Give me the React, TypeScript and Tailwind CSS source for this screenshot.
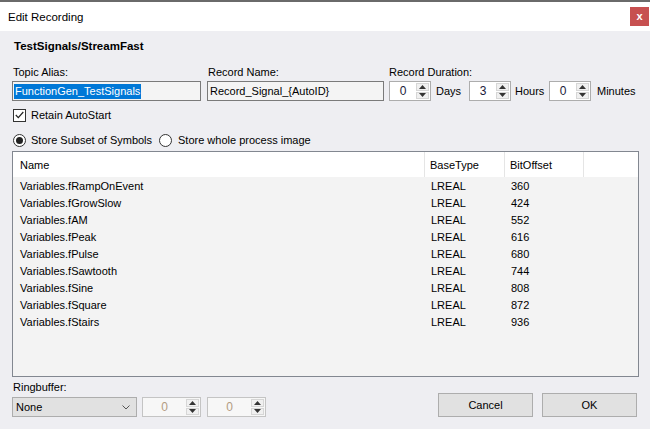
import React from 'react';

const rows: [string, string, string][] = [
  ['Variables.fRampOnEvent', 'LREAL', '360'],
  ['Variables.fGrowSlow', 'LREAL', '424'],
  ['Variables.fAM', 'LREAL', '552'],
  ['Variables.fPeak', 'LREAL', '616'],
  ['Variables.fPulse', 'LREAL', '680'],
  ['Variables.fSawtooth', 'LREAL', '744'],
  ['Variables.fSine', 'LREAL', '808'],
  ['Variables.fSquare', 'LREAL', '872'],
  ['Variables.fStairs', 'LREAL', '936'],
];

function SpinArrows() {
  return (
    <div className="flex flex-col w-[14px] h-full py-[1px] pr-[1px] gap-[1px]">
      <div className="flex-1 flex items-center justify-center border border-[#d6d6d6] bg-[#f0f0f0]">
        <svg width="7" height="4" viewBox="0 0 7 4"><path d="M0 4 L3.5 0 L7 4 Z" fill="#333" /></svg>
      </div>
      <div className="flex-1 flex items-center justify-center border border-[#d6d6d6] bg-[#f0f0f0]">
        <svg width="7" height="4" viewBox="0 0 7 4"><path d="M0 0 L3.5 4 L7 0 Z" fill="#333" /></svg>
      </div>
    </div>
  );
}

function Spinner({ value, width, disabled }: { value: string; width: string; disabled?: boolean }) {
  return (
    <div className={`flex shrink-0 h-[20px] border ${disabled ? 'border-[#c4c4c4] bg-[#f7f7f7]' : 'border-[#adadad] bg-white'} ${width}`}>
      <div className={`flex-1 flex items-center justify-center text-[12px] ${disabled ? 'text-[#b39c82]' : 'text-[#1a1a3a]'}`}>
        {value}
      </div>
      <SpinArrows />
    </div>
  );
}

export default function App() {
  return (
    <div className="w-[650px] h-[429px] overflow-hidden flex flex-col bg-[#eeeef2] text-[11px] text-black font-['Segoe_UI','Liberation_Sans',sans-serif] leading-[16px]">
      <div className="h-[2px] bg-[#6a6a6a]" />
      <div className="h-[29px] bg-white flex items-center justify-between pl-[8px] pr-[1px]">
        <span className="text-[11.5px]">Edit Recording</span>
        <div className="w-[19px] h-[19px] bg-[#c75050] flex items-center justify-center text-white font-bold text-[11px] mb-[1px]">
          x
        </div>
      </div>

      <div className="flex-1 flex flex-col px-[12px]">
        <div className="mt-[7px] pl-[2px] font-bold h-[16px] text-[11.5px]">TestSignals/StreamFast</div>

        <div className="mt-[10px] flex">
          <div className="flex flex-col w-[189px] shrink-0">
            <span className="pl-[1px]">Topic Alias:</span>
            <div className="mt-[1px] h-[20px] border border-[#7a7a7a] bg-[#f4f4f4] flex items-center px-[1px]">
              <span className="bg-[#0078d7] text-white leading-[15px] px-[1px]">FunctionGen_TestSignals</span>
            </div>
          </div>
          <div className="flex flex-col w-[177px] ml-[6px] shrink-0">
            <span className="pl-[1px]">Record Name:</span>
            <div className="mt-[1px] h-[20px] border border-[#7a7a7a] bg-[#f4f4f4] flex items-center px-[2px]">
              Record_Signal_{'{'}AutoID{'}'}
            </div>
          </div>
          <div className="flex flex-col ml-[5px] shrink-0">
            <span>Record Duration:</span>
            <div className="mt-[1px] flex items-center">
              <Spinner value="0" width="w-[42px]" />
              <span className="ml-[5px] w-[33px]">Days</span>
              <Spinner value="3" width="w-[42px]" />
              <span className="ml-[4px] w-[34px]">Hours</span>
              <Spinner value="0" width="w-[42px]" />
              <span className="ml-[6px]">Minutes</span>
            </div>
          </div>
        </div>

        <div className="mt-[7px] flex items-center pl-[1px] h-[14px]">
          <div className="w-[13px] h-[13px] border border-[#333] bg-white flex items-center justify-center">
            <svg width="9" height="8" viewBox="0 0 9 8">
              <path d="M0.8 4 L3.3 6.6 L8.3 1" stroke="#222" strokeWidth="1.2" fill="none" />
            </svg>
          </div>
          <span className="ml-[5px]">Retain AutoStart</span>
        </div>

        <div className="mt-[11px] flex items-center pl-[1px] h-[14px]">
          <div className="w-[13px] h-[13px] rounded-full border border-[#333] bg-white flex items-center justify-center">
            <div className="w-[7px] h-[7px] rounded-full bg-[#222]" />
          </div>
          <span className="ml-[5px] w-[128px]">Store Subset of Symbols</span>
          <div className="w-[13px] h-[13px] rounded-full border border-[#333] bg-white" />
          <span className="ml-[6px]">Store whole process image</span>
        </div>

        <div className="mt-[4px] h-[226px] w-[627px] border border-[#828790] bg-[#f3f3f3] flex flex-col">
          <div className="h-[25px] bg-white flex items-stretch">
            <div className="w-[412px] flex items-center pl-[7px] border-r border-[#e5e5e5]">Name</div>
            <div className="w-[80px] flex items-center pl-[5px] border-r border-[#e5e5e5]">BaseType</div>
            <div className="w-[79px] flex items-center pl-[5px] border-r border-[#e5e5e5]">BitOffset</div>
            <div className="flex-1" />
          </div>
          <div className="flex flex-col">
            {rows.map(([name, type, off]) => (
              <div key={name} className="h-[17px] flex items-center">
                <div className="w-[412px] pl-[7px]">{name}</div>
                <div className="w-[80px] pl-[6px]">{type}</div>
                <div className="w-[79px] pl-[6px]">{off}</div>
              </div>
            ))}
          </div>
        </div>

        <div className="flex justify-between mt-[2px]">
          <div className="flex flex-col">
            <span className="pl-[1px]">Ringbuffer:</span>
            <div className="mt-[2px] flex items-center">
              <div className="w-[125px] h-[20px] border border-[#adadad] bg-[#e1e1e1] flex items-center justify-between pl-[3px] pr-[6px]">
                <span>None</span>
                <svg width="8" height="5" viewBox="0 0 8 5">
                  <path d="M0.5 0.5 L4 4 L7.5 0.5" stroke="#555" strokeWidth="1" fill="none" />
                </svg>
              </div>
              <div className="ml-[5px]">
                <Spinner value="0" width="w-[59px]" disabled />
              </div>
              <div className="ml-[6px]">
                <Spinner value="0" width="w-[59px]" disabled />
              </div>
            </div>
          </div>
          <div className="flex mt-[14px] mr-[1px] gap-[9px]">
            <button className="w-[95px] h-[24px] border border-[#adadad] bg-[#e1e1e1]">Cancel</button>
            <button className="w-[95px] h-[24px] border border-[#adadad] bg-[#e1e1e1]">OK</button>
          </div>
        </div>
      </div>
    </div>
  );
}
